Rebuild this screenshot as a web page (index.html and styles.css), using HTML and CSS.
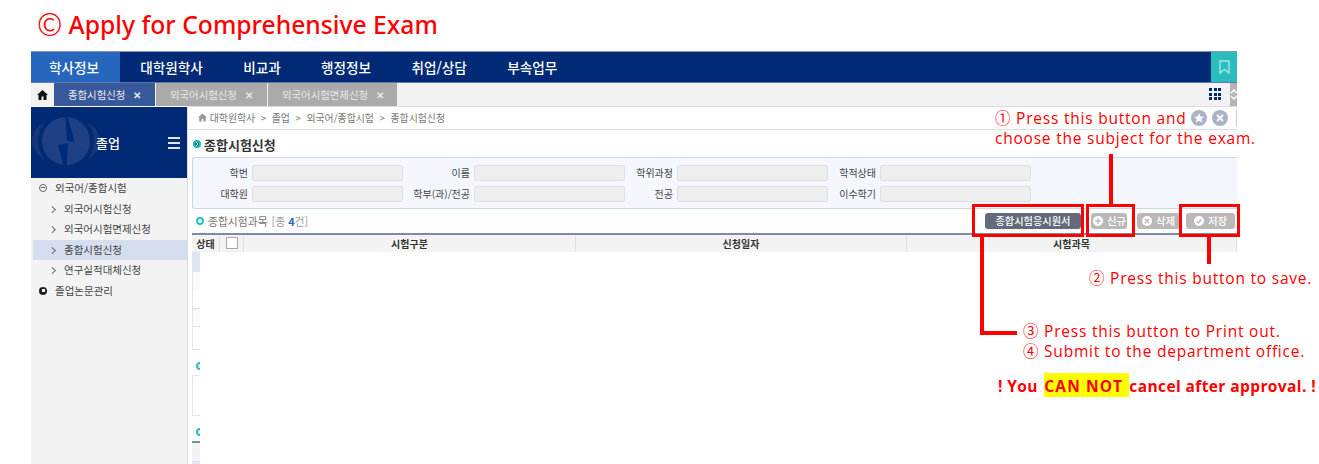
FILE: index.html
```html
<!DOCTYPE html>
<html lang="ko">
<head>
<meta charset="utf-8">
<title>Apply for Comprehensive Exam</title>
<link rel="stylesheet" href="styles.css">
</head>
<body>
<h1 class="page-title"><span class="title-mark">©</span>Apply for Comprehensive Exam</h1>
<div class="app">
  <nav class="topnav">
    <a class="nav-item nav-active">학사정보</a>
    <a class="nav-item">대학원학사</a>
    <a class="nav-item">비교과</a>
    <a class="nav-item">행정정보</a>
    <a class="nav-item">취업/상담</a>
    <a class="nav-item">부속업무</a>
    <span class="bookmark"><svg width="11" height="14" viewBox="0 0 11 14"><path d="M1 1h9v12l-4.500-3.500L1 13z" fill="none" stroke="#a5e6e4" stroke-width="1.400"/></svg></span>
  </nav>
  <div class="tabbar">
    <span class="tab-home"><svg width="11" height="10" viewBox="0 0 11 10"><path d="M5.500 0 11 5H9.500v5H6.500V6.500h-2V10h-3V5H0z" fill="#111"/></svg></span>
    <span class="tab tab-on">종합시험신청<i class="tab-x">✕</i></span>
    <span class="tab tab-off">외국어시험신청<i class="tab-x">✕</i></span>
    <span class="tab tab-off tab-wide">외국어시험면제신청<i class="tab-x">✕</i></span>
    <span class="grid-icon"><i></i><i></i><i></i><i></i><i></i><i></i><i></i><i></i><i></i></span>
    <span class="tab-scroll"><svg width="7" height="22" viewBox="0 0 7 22"><path d="M1 10l3-3 3 3M1 13l3 3 3-3" fill="none" stroke="#fff" stroke-width="1.500"/></svg></span>
  </div>
  <div class="workspace">
    <aside class="sidebar">
      <div class="side-head">
        <svg class="side-logo" width="72" height="71" viewBox="0 0 72 71">
          <ellipse cx="35" cy="34" rx="34" ry="24" fill="#17377a"/>
          <circle cx="35" cy="34" r="28" fill="#002a75"/>
          <circle cx="35" cy="34" r="24" fill="#1f4084"/>
          <path d="M34 2 44 35 36 34z" fill="#002a75"/>
          <path d="M27 38 37 36 35 68z" fill="#002a75"/>
        </svg>
        <span class="side-title">졸업</span>
        <span class="burger"><i></i><i></i><i></i></span>
      </div>
      <ul class="side-menu">
        <li class="menu-group"><span class="ico-minus"></span>외국어/종합시험</li>
        <li class="menu-sub">외국어시험신청</li>
        <li class="menu-sub">외국어시험면제신청</li>
        <li class="menu-sub menu-on">종합시험신청</li>
        <li class="menu-sub">연구실적대체신청</li>
        <li class="menu-group"><span class="ico-plus"></span>졸업논문관리</li>
      </ul>
    </aside>
    <main class="content">
      <div class="crumbs">
        <span class="crumb-path"><svg width="9" height="9" viewBox="0 0 11 10"><path d="M5.500 0 11 5H9.500v5H6.500V6.500h-2V10h-3V5H0z" fill="#999"/></svg> 대학원학사 &nbsp;&gt;&nbsp; 졸업 &nbsp;&gt;&nbsp; 외국어/종합시험 &nbsp;&gt;&nbsp; 종합시험신청</span>
        <span class="crumb-tools">
          <span class="round-ico"><svg width="10" height="10" viewBox="0 0 10 10"><path d="M5 0l1.500 3.400 3.500.3-2.700 2.300.9 3.600L5 7.700 1.800 9.600l.9-3.600L0 3.700l3.500-.3z" fill="#fff"/></svg></span>
          <span class="round-ico"><svg width="8" height="8" viewBox="0 0 8 8"><path d="M1 1l6 6M7 1 1 7" stroke="#fff" stroke-width="1.800"/></svg></span>
        </span>
      </div>
      <h2 class="main-title"><span class="dot-big"><svg width="4" height="4" viewBox="0 0 4 4"><path d="M1 0l2 2-2 2" fill="none" stroke="#bfeef0" stroke-width="1"/></svg></span>종합시험신청</h2>
      <section class="form-box">
        <label class="f-label">학번</label><span class="f-input"></span>
        <label class="f-label">이름</label><span class="f-input"></span>
        <label class="f-label">학위과정</label><span class="f-input"></span>
        <label class="f-label">학적상태</label><span class="f-input"></span>
        <label class="f-label">대학원</label><span class="f-input"></span>
        <label class="f-label">학부(과)/전공</label><span class="f-input"></span>
        <label class="f-label">전공</label><span class="f-input"></span>
        <label class="f-label">이수학기</label><span class="f-input"></span>
      </section>
      <div class="section-head">
        <span class="section-name"><span class="dot-small"></span>종합시험과목 <span class="count">[종 <b>4</b>건]</span></span>
        <span class="actions">
          <button class="btn btn-dark">종합시험응시원서</button>
          <button class="btn btn-new"><svg class="btn-ico" viewBox="0 0 10 10"><circle cx="5" cy="5" r="5" fill="#fff"/><path d="M5 2.200v5.600M2.200 5h5.600" stroke="#b9b9b9" stroke-width="1.500"/></svg>신규</button>
          <button class="btn btn-del"><svg class="btn-ico" viewBox="0 0 10 10"><circle cx="5" cy="5" r="5" fill="#fff"/><path d="M3 3l4 4M7 3 3 7" stroke="#b9b9b9" stroke-width="1.500"/></svg>삭제</button>
          <button class="btn btn-save"><svg class="btn-ico" viewBox="0 0 10 10"><circle cx="5" cy="5" r="5" fill="#fff"/><path d="M2.600 5.200 4.400 7l3-3.600" fill="none" stroke="#b9b9b9" stroke-width="1.500"/></svg>저장</button>
        </span>
      </div>
      <div class="grid-head">
        <span>상태</span><span><i class="check"></i></span><span>시험구분</span><span>신청일자</span><span>시험과목</span>
      </div>
      <div class="sliver">
        <div class="row row-sel"></div>
        <div class="row row-alt"></div>
        <div class="row row-line"></div>
        <div class="row row-alt row-line"></div>
        <div class="row row-tall"></div>
        <div class="sl-head"><span class="dot-small"></span></div>
        <div class="sl-box"></div>
        <div class="sl-head"><span class="dot-small"></span></div>
        <div class="sl-table"><div class="sl-th"></div><div class="sl-td"></div></div>
      </div>
    </main>
  </div>
</div>

<div class="mark mark-1"></div>
<div class="mark mark-2"></div>
<div class="mark mark-3"></div>
<div class="lead lead-1"></div>
<div class="lead lead-2"></div>
<div class="lead lead-3"></div>
<div class="lead lead-3b"></div>
<p class="note note-1">① Press this button and</p>
<p class="note note-1b">choose the subject for the exam.</p>
<p class="note note-2">② Press this button to save.</p>
<p class="note note-3">③ Press this button to Print out.</p>
<p class="note note-4">④ Submit to the department office.</p>
<p class="note note-warn">! You <mark class="hl">CAN NOT </mark>cancel after approval. !</p>
</body>
</html>
```
FILE: styles.css
```css
* { box-sizing: border-box; }
html, body { margin: 0; padding: 0; height: 464px; overflow: hidden; background: #fff; }
body { position: relative; font-family: "Noto Sans CJK KR", sans-serif; color: #444; font-size: 10px; }
ul { list-style: none; margin: 0; padding: 0; }
i { font-style: normal; }

.page-title { margin: 0; height: 51px; padding: 0 0 0 37px; font: 500 24.700px/50px "Noto Sans", "Noto Sans CJK KR", sans-serif; color: #f00; white-space: nowrap; display: flex; align-items: flex-start; }
.title-mark { font-family: "Noto Sans CJK KR", sans-serif; font-weight: 300; font-size: 31px; line-height: 45px; margin-right: 6px; }

.app { margin-left: 31px; width: 1206px; height: 413px; overflow: hidden; display: flex; flex-direction: column; }

.topnav { height: 32px; flex: none; background: #002a75; border-top: 1px solid #8494b8; border-bottom: 1px solid #5f78a8; display: flex; align-items: stretch; }
.nav-item { padding: 0 20.200px; color: #fff; font-size: 13.600px; font-weight: 500; line-height: 30px; }
.nav-active { background: #2766bd; padding: 0 21px 0 18px; }
.bookmark { margin-left: auto; width: 26px; background: #29bdbd; display: flex; align-items: center; justify-content: center; }

.tabbar { height: 23px; flex: none; background: #f2f2f2; display: flex; align-items: stretch; }
.tab-home { width: 23px; display: flex; align-items: center; justify-content: center; }
.tab { color: #e8e8e8; font-size: 10.400px; line-height: 23px; padding-left: 14px; white-space: nowrap; }
.tab-x { margin-left: 8px; font-size: 9.500px; font-weight: 700; }
.tab-on { width: 101px; background: #37589a; }
.tab-off { width: 111px; background: #aaa; margin-left: 1px; }
.tab-wide { width: 129px; }
.grid-icon { margin: 5px 9px 0 auto; width: 12px; height: 12px; display: grid; grid-template-columns: repeat(3, 3px); gap: 1.500px; }
.grid-icon i { background: #002a75; }
.tab-scroll { width: 7px; background: #b5b5b5; overflow: hidden; }

.workspace { flex: 1; display: flex; min-height: 0; margin-top: 1px; }

.sidebar { width: 157px; flex: none; background: #f3f3f3; border-right: 1px solid #ddd; }
.side-head { height: 71px; background: #002a75; position: relative; display: flex; align-items: center; padding-left: 65px; }
.side-logo { position: absolute; left: 0; top: 0; }
.side-title { position: relative; color: #fff; font-size: 13px; font-weight: 500; }
.burger { position: absolute; right: 7px; top: 30px; width: 12px; display: flex; flex-direction: column; gap: 3px; }
.burger i { height: 2px; background: #dfe6f3; }

.side-menu li { height: 20.500px; line-height: 20px; white-space: nowrap; color: #444; font-size: 10.500px; }
.menu-group { padding-left: 24px; position: relative; }
.menu-sub { padding-left: 31px; position: relative; margin-left: 2px; }
.menu-sub::before { content: ""; position: absolute; left: 17px; top: 8px; width: 3.500px; height: 3.500px; border-top: 1px solid #666; border-right: 1px solid #666; transform: rotate(45deg); }
.menu-on { background: #d5deef; }
.ico-minus, .ico-plus { position: absolute; left: 8px; top: 6px; width: 8px; height: 8px; border-radius: 50%; }
.ico-minus { border: 1px solid #666; }
.ico-minus::after { content: ""; position: absolute; left: 1px; right: 1px; top: 2px; height: 1px; background: #666; }
.ico-plus { background: #222; }
.ico-plus::after { content: ""; position: absolute; left: 2.500px; top: 2.500px; width: 3px; height: 3px; background: #f3f3f3; }

.content { flex: 1; min-width: 0; display: flex; flex-direction: column; }
.crumbs { height: 24px; flex: none; margin-top: -1px; border-top: 1px solid #ddd; border-bottom: 1px solid #ddd; display: flex; justify-content: space-between; align-items: center; padding-left: 10px; color: #777; font-size: 9.900px; }
.crumb-tools { display: flex; gap: 5px; padding-right: 8px; height: 18px; align-items: center; border-right: 1px solid #ccc; }
.round-ico { width: 16px; height: 16px; border-radius: 50%; background: #aab2c8; display: flex; align-items: center; justify-content: center; }

.main-title { margin: 0; height: 27px; flex: none; padding: 1px 0 0 5px; display: flex; align-items: center; gap: 3px; font-size: 13px; font-weight: 700; color: #333; }
.dot-big { width: 8px; height: 8px; border-radius: 50%; background: #0f7d92; border: 2px solid #20b4bb; display: flex; align-items: center; justify-content: center; }

.form-box { height: 52px; flex: none; margin-left: 4px; background: #f4f8fe; border: 1px solid #c9d7ea; border-right: 0; border-radius: 3px 0 0 3px; padding: 7px 0 6px; display: grid; grid-template-columns: 55px 151px 63px 151px 44px 151px 44px 151px; column-gap: 4px; row-gap: 5px; grid-auto-rows: 16px; justify-content: start; }
.f-label { text-align: right; font-size: 10px; line-height: 16px; color: #444; white-space: nowrap; }
.f-input { background: #eee; border: 1px solid #e0e0e0; border-radius: 2px; }

.section-head { height: 24px; flex: none; display: flex; justify-content: space-between; align-items: center; margin-left: 4px; padding: 0 2px 0 4px; }
.section-name { display: flex; align-items: center; gap: 4px; color: #777; font-size: 10.800px; }
.count { color: #999; }
.count b { color: #2766bd; }
.dot-small { flex: none; display: inline-block; width: 8px; height: 8px; border-radius: 50%; background: #e3fbfb; border: 2px solid #2fbcc2; }

.actions { display: flex; gap: 7px; align-items: center; }
.btn { height: 16px; padding: 0; border: 0; border-radius: 3px; color: #fff; font: 500 10.400px/16px "Noto Sans CJK KR", sans-serif; background: #b9b9b9; display: flex; align-items: center; justify-content: center; gap: 4px; }
.btn-dark { width: 96px; background: #636a7a; margin-right: 3px; font-size: 10.200px; }
.btn-new { width: 36px; justify-content: flex-end; padding-right: 1px; }
.btn-del { width: 43px; margin-left: 3px; }
.btn-save { width: 49px; margin-left: -1px; }
.btn-ico { width: 10px; height: 10px; flex: none; }

.grid-head { height: 19px; flex: none; margin-left: 4px; background: #f3f3f3; border-top: 2px solid #7d8ca3; display: grid; grid-template-columns: 28px 24px 332px 331px 1fr; font-size: 10px; font-weight: 700; color: #333; text-align: center; line-height: 18px; }
.grid-head > span { border-right: 1px solid #e0e0e0; height: 17px; }
.check { display: inline-block; width: 12px; height: 12px; margin-top: 2px; background: #fff; border: 1px solid #aaa; }

.sliver { width: 8px; margin-left: 4px; flex: 1; overflow: hidden; }
.row { height: 19px; border-left: 1px solid #e6e6e6; }
.row-sel { height: 20px; background: #dfe5f3; border-left: 0; }
.row-alt { height: 18px; background: #fafafa; }
.row-line { border-bottom: 1px solid #ddd; }
.row-tall { height: 23px; border-bottom: 1px solid #ddd; }
.sl-head { height: 25px; padding: 8px 0 0 4px; overflow: hidden; }
.sl-box { height: 41px; border: 1px solid #e6e6e6; border-right: 0; }
.sl-table { border-top: 2px solid #7d8ca3; }
.sl-th { height: 18px; background: #f3f3f3; }
.sl-td { height: 20px; background: #dfe5f3; }

.mark, .lead { position: absolute; }
.mark { border: 3.500px solid #f00; top: 204px; height: 33px; }
.mark-1 { left: 972px; width: 112px; }
.mark-2 { left: 1086px; width: 49px; }
.mark-3 { left: 1179px; width: 61px; }
.lead { background: #f00; }
.lead-1 { left: 1109px; top: 154px; width: 4px; height: 50px; }
.lead-2 { left: 1207px; top: 237px; width: 4px; height: 27px; }
.lead-3 { left: 980px; top: 237px; width: 4px; height: 97px; }
.lead-3b { left: 980px; top: 331px; width: 37px; height: 3.500px; }

.note { position: absolute; margin: 0; color: #f00; font: 400 15.500px/20px "Open Sans", "Noto Sans CJK KR", sans-serif; letter-spacing: 0.780px; white-space: nowrap; }
.note-1 { left: 995px; top: 108px; }
.note-1b { left: 995px; top: 128px; }
.note-2 { left: 1089px; top: 268px; }
.note-3 { left: 1023px; top: 321px; }
.note-4 { left: 1023px; top: 341px; }
.note-warn { left: 998px; top: 376px; font-weight: 700; letter-spacing: 0.400px; }
.hl { background: #ff0; color: #f00; padding: 2px 1px 0 0.500px; margin-left: 1.500px; letter-spacing: 1.100px; }
```
